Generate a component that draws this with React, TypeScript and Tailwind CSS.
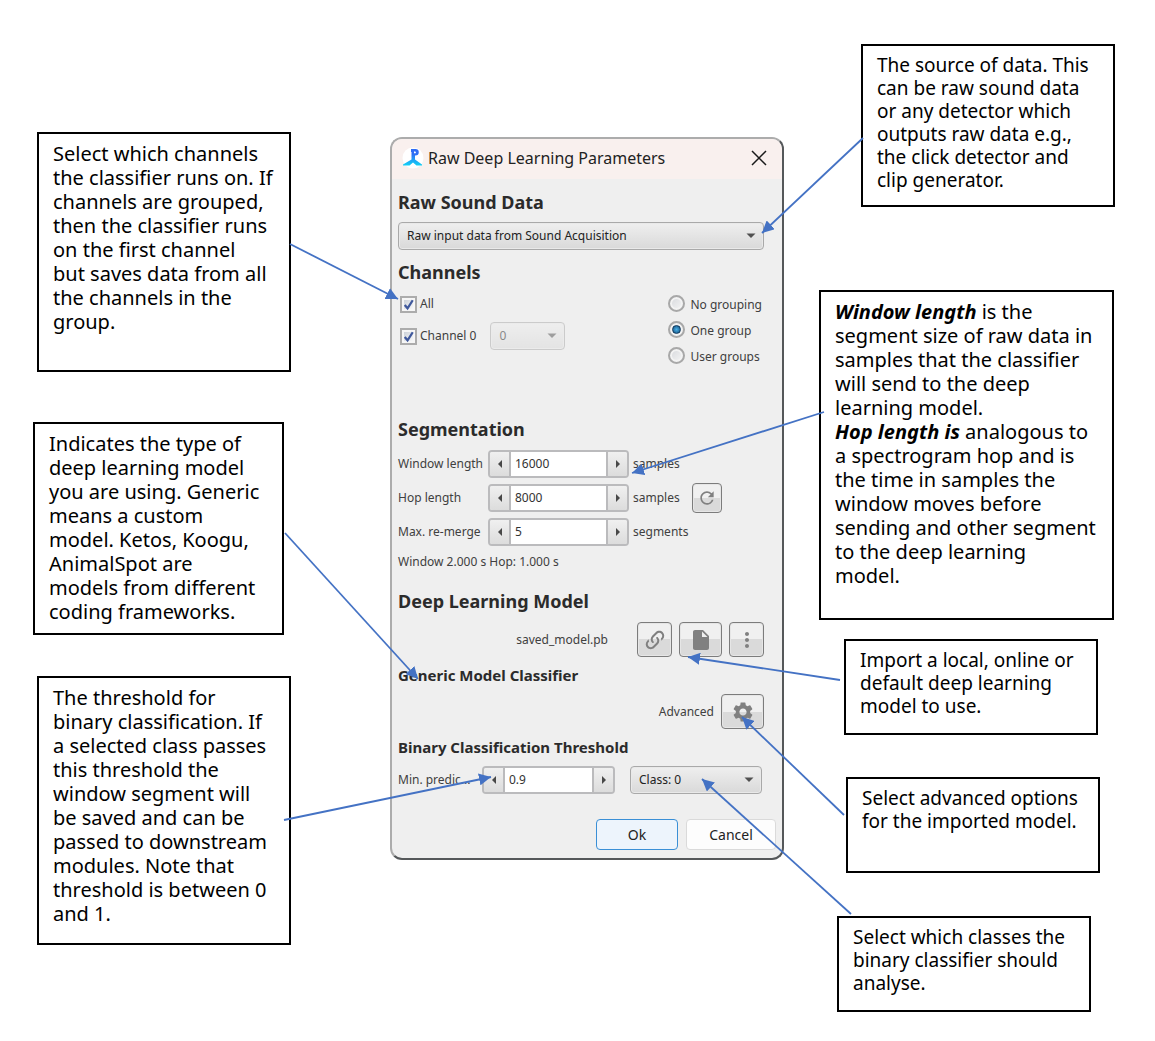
import { useId, useState, type ReactNode } from "react";
import { MdInsertDriveFile, MdMoreVert, MdRefresh, MdSettings } from "react-icons/md";

function Callout({ className, children }: { className: string; children: ReactNode }) {
  return (
    <aside className={`whitespace-pre border-2 border-black bg-white px-3.5 pt-2 text-black ${className}`}>
      {children}
    </aside>
  );
}

function Triangle({ d, className }: { d: string; className: string }) {
  return (
    <svg viewBox="0 0 10 10" className={className} aria-hidden="true">
      <path d={d} fill="currentColor" />
    </svg>
  );
}

function Dropdown({
  label,
  options,
  className,
  disabled = false,
}: {
  label: string;
  options: string[];
  className: string;
  disabled?: boolean;
}) {
  return (
    <div className={`relative h-7 ${className} ${disabled ? "opacity-50" : ""}`}>
      <select
        aria-label={label}
        disabled={disabled}
        className="h-7 w-full appearance-none rounded-[4px] border border-[#a9a9a9] bg-linear-to-b from-[#efefef] to-[#d9d9d9] px-2 text-xs text-[#222] ring-1 ring-[#e9e9e9] ring-inset"
      >
        {options.map((o) => (
          <option key={o}>{o}</option>
        ))}
      </select>
      <Triangle d="M0.5 2.5H9.5L5 7Z" className="pointer-events-none absolute top-[9px] right-2 size-2.5 text-[#505050]" />
    </div>
  );
}

function Spinner({ id, initial, step, width }: { id: string; initial: number; step: number; width: string }) {
  const [value, setValue] = useState(String(initial));
  const change = (by: number) => setValue((v) => String(Math.round((Number(v) + by) * 10) / 10));
  const button =
    "flex w-[19px] shrink-0 items-center justify-center bg-linear-to-b from-[#f0f0f0] to-[#dcdcdc] text-[#484848]";
  return (
    <div className={`flex h-7 shrink-0 overflow-hidden rounded-[4px] border-2 border-[#bbbbbd] ${width}`}>
      <button type="button" aria-label="Decrease" className={button} onClick={() => change(-step)}>
        <Triangle d="M7 1V9L3 5Z" className="size-2.5" />
      </button>
      <input
        id={id}
        value={value}
        onChange={(e) => setValue(e.target.value)}
        className="w-full min-w-0 border-x-2 border-[#bbbbbd] bg-white px-1 text-xs text-[#333]"
      />
      <button type="button" aria-label="Increase" className={button} onClick={() => change(step)}>
        <Triangle d="M3 1V9L7 5Z" className="size-2.5" />
      </button>
    </div>
  );
}

function IconButton({ label, className, children }: { label: string; className: string; children: ReactNode }) {
  return (
    <button
      type="button"
      aria-label={label}
      className={`flex shrink-0 items-center justify-center rounded-[4px] border border-[#7c7c7c] bg-linear-to-b from-[#f0f0f0] from-50% to-[#dadada] to-50% text-[#808080] ring-1 ring-[#e6e6e6] ring-inset ${className}`}
    >
      {children}
    </button>
  );
}

function Check({ label }: { label: string }) {
  const [on, setOn] = useState(true);
  return (
    <label className="flex items-center gap-[3px]">
      <span className="relative size-[17px]">
        <input
          type="checkbox"
          checked={on}
          onChange={() => setOn(!on)}
          className="block size-[17px] appearance-none border-2 border-[#acacac] bg-linear-to-br from-[#c4cad2] to-white ring-2 ring-[#f6f6f6] ring-inset"
        />
        {on && (
          <svg viewBox="0 0 18 18" className="pointer-events-none absolute inset-0 size-[17px]" aria-hidden="true">
            <path d="M5 9.5L8 13L13.5 4.5" fill="none" stroke="#3f589c" strokeWidth="2.4" />
          </svg>
        )}
      </span>
      {label}
    </label>
  );
}

function Radio({ label, checked, onSelect }: { label: string; checked: boolean; onSelect: () => void }) {
  return (
    <label className="flex h-[26px] items-center gap-[5px]">
      <span className="relative mb-1 size-[17px]">
        <input
          type="radio"
          name="grouping"
          checked={checked}
          onChange={onSelect}
          className="block size-[17px] appearance-none rounded-full border-2 border-[#a8a8a8] bg-linear-to-br from-[#d6d8dc] to-[#f6f6f6] ring-2 ring-[#f3f3f3] ring-inset"
        />
        {checked && (
          <span className="pointer-events-none absolute inset-1 rounded-full border border-[#123a5e] bg-radial from-[#49b0e8] to-[#11507f]" />
        )}
      </span>
      {label}
    </label>
  );
}

function SpinnerRow({
  label,
  unit,
  initial,
  step,
  children,
}: {
  label: string;
  unit: string;
  initial: number;
  step: number;
  children?: ReactNode;
}) {
  const id = useId();
  return (
    <div className="flex h-7 items-center">
      <label htmlFor={id} className="w-[90px] shrink-0 whitespace-nowrap">
        {label}
      </label>
      <Spinner id={id} initial={initial} step={step} width="w-[141px]" />
      <span className="w-[63px] shrink-0 pl-1">{unit}</span>
      {children}
    </div>
  );
}

function Dialog() {
  const [grouping, setGrouping] = useState("One group");
  const predictionId = useId();
  const section = "text-lg leading-6 font-bold text-[#2b2b2b]";
  const subsection = "text-[15px] leading-5 font-bold text-[#2b2b2b]";
  return (
    <section
      role="dialog"
      aria-labelledby="dialog-title"
      className="mt-[137px] w-[394px] shrink-0 overflow-hidden rounded-xl border-2 border-t-[#acacac] border-r-[#55585a] border-b-[#55585a] border-l-[#acacac] bg-[#efefef] text-xs text-[#404040]"
    >
      <header className="flex h-10 items-center bg-[#f9f0ee] pr-[15px] pb-0.5 pl-2.5">
        <svg viewBox="0 0 22 22" className="mr-1 size-[22px]" aria-hidden="true">
          <defs>
            <linearGradient id="logo" x1="0" y1="0" x2="0" y2="1">
              <stop offset="0.3" stopColor="#2f6df5" />
              <stop offset="1" stopColor="#13d2f5" />
            </linearGradient>
          </defs>
          <circle cx="11" cy="11" r="10.5" fill="#fff" />
          <path
            d="M9 2H13.5A3.2 3.2 0 0 1 13.5 8.5H13V12.5L20 17.5V18.5H14.5L11 15.5L7.5 18.5H1V17.5L9.5 12.5V5H9ZM12 4.5V6.3H13A0.9 0.9 0 0 0 13 4.5Z"
            fill="url(#logo)"
            fillRule="evenodd"
          />
        </svg>
        <h1 id="dialog-title" className="grow text-base text-[#222]">
          Raw Deep Learning Parameters
        </h1>
        <button type="button" aria-label="Close">
          <svg viewBox="0 0 16 16" className="size-4" aria-hidden="true">
            <path d="M1 1L15 15M15 1L1 15" stroke="#1a1a1a" strokeWidth="1.5" />
          </svg>
        </button>
      </header>

      <div className="px-1.5 pt-[11px] pb-2">
        <h2 className={section}>Raw Sound Data</h2>
        <Dropdown
          label="Raw Sound Data"
          options={["Raw input data from Sound Acquisition"]}
          className="mt-2 mr-3"
        />

        <h2 className={`mt-2.5 ${section}`}>Channels</h2>
        <div className="mt-1.5 flex items-start justify-between pr-3.5">
          <div className="pl-0.5">
            <div className="flex h-7 items-center">
              <Check label="All" />
            </div>
            <div className="mt-1 flex items-center justify-between gap-3.5">
              <Check label="Channel 0" />
              <Dropdown label="Channel 0 group" options={["0"]} className="w-[75px]" disabled />
            </div>
          </div>
          <fieldset className="flex flex-col pt-0.5">
            {["No grouping", "One group", "User groups"].map((g) => (
              <Radio key={g} label={g} checked={grouping === g} onSelect={() => setGrouping(g)} />
            ))}
          </fieldset>
        </div>

        <h2 className={`mt-[47px] ${section}`}>Segmentation</h2>
        <div className="mt-[9px] flex flex-col gap-1.5">
          <SpinnerRow label="Window length" unit="samples" initial={16000} step={1000} />
          <SpinnerRow label="Hop length" unit="samples" initial={8000} step={1000}>
            <IconButton label="Reset hop length" className="size-[30px]">
              <MdRefresh className="size-5" />
            </IconButton>
          </SpinnerRow>
          <SpinnerRow label="Max. re-merge" unit="segments" initial={5} step={1} />
        </div>
        <p className="mt-1.5 leading-5">Window 2.000 s Hop: 1.000 s</p>

        <h2 className={`mt-[17px] ${section}`}>Deep Learning Model</h2>
        <div className="mt-[9px] flex items-center justify-end pr-3">
          <span className="mr-[29px]">saved_model.pb</span>
          <IconButton label="Model from link" className="mr-[7px] h-[35px] w-[35px]">
            <svg viewBox="0 0 24 24" className="size-6" fill="currentColor" aria-hidden="true">
              <path d="M10.59 13.41C11 13.8 11 14.44 10.59 14.83C10.2 15.22 9.56 15.22 9.17 14.83C7.22 12.88 7.22 9.71 9.17 7.76L12.71 4.22C14.66 2.27 17.83 2.27 19.78 4.22C21.73 6.17 21.73 9.34 19.78 11.29L18.29 12.78C18.3 11.96 18.17 11.14 17.89 10.36L18.36 9.88C19.54 8.71 19.54 6.81 18.36 5.64C17.19 4.46 15.29 4.46 14.12 5.64L10.59 9.17C9.41 10.34 9.41 12.24 10.59 13.41M13.41 9.17C13.8 8.78 14.44 8.78 14.83 9.17C16.78 11.12 16.78 14.29 14.83 16.24L11.29 19.78C9.34 21.73 6.17 21.73 4.22 19.78C2.27 17.83 2.27 14.66 4.22 12.71L5.71 11.22C5.7 12.04 5.83 12.86 6.11 13.65L5.64 14.12C4.46 15.29 4.46 17.19 5.64 18.36C6.81 19.54 8.71 19.54 9.88 18.36L13.41 14.83C14.59 13.66 14.59 11.76 13.41 10.59C13 10.2 13 9.56 13.41 9.17Z" />
            </svg>
          </IconButton>
          <IconButton label="Model from file" className="mr-[7px] h-[35px] w-[43px]">
            <MdInsertDriveFile className="size-6" />
          </IconButton>
          <IconButton label="More models" className="h-[35px] w-[35px]">
            <MdMoreVert className="size-6" />
          </IconButton>
        </div>

        <h3 className={`mt-2 ${subsection}`}>Generic Model Classifier</h3>
        <div className="mt-[9px] flex items-center justify-end gap-[7px] pr-3">
          <span>Advanced</span>
          <IconButton label="Advanced" className="h-[35px] w-[43px]">
            <MdSettings className="size-6" />
          </IconButton>
        </div>

        <h3 className={`mt-2 ${subsection}`}>Binary Classification Threshold</h3>
        <div className="mt-[9px] flex items-center pr-3.5">
          <label htmlFor={predictionId} className="w-[84px] shrink-0">
            Min. predic...
          </label>
          <Spinner id={predictionId} initial={0.9} step={0.1} width="w-[133px]" />
          <Dropdown label="Class" options={["Class: 0"]} className="ml-auto w-[132px]" />
        </div>

        <div className="mt-[25px] flex justify-end gap-2 text-sm text-[#222]">
          <button type="button" className="h-[31px] w-[82px] rounded-[4px] border border-[#3a8fd6] bg-[#edf4fc]">
            Ok
          </button>
          <button type="button" className="h-[31px] w-[90px] rounded-[4px] border border-[#dadada] bg-[#fdfdfd]">
            Cancel
          </button>
        </div>
      </div>
    </section>
  );
}

const arrows = [
  [863, 138, 762, 233],
  [290, 244, 398, 299],
  [824, 412, 632, 473],
  [285, 533, 418, 679],
  [840, 680, 688, 657],
  [844, 815, 742, 717],
  [284, 820, 491, 777],
  [851, 914, 702, 779],
];

export default function App() {
  return (
    <div className="min-h-screen overflow-x-auto bg-white font-['Noto_Sans',sans-serif]">
      <main className="relative mx-auto flex w-fit items-start pr-10 pl-[33px]">
        <div className="mt-[132px] mr-[99px] flex w-[258px] shrink-0 flex-col text-xl leading-6">
          <Callout className="ml-1 min-h-60">
            {"Select which channels\nthe classifier runs on. If\nchannels are grouped,\nthen the classifier runs\non the first channel\nbut saves data from all\nthe channels in the\ngroup."}
          </Callout>
          <Callout className="mt-[50px] mr-[7px] min-h-[213px]">
            {"Indicates the type of\ndeep learning model\nyou are using. Generic\nmeans a custom\nmodel. Ketos, Koogu,\nAnimalSpot are\nmodels from different\ncoding frameworks."}
          </Callout>
          <Callout className="mt-[41px] ml-1 min-h-[269px]">
            {"The threshold for\nbinary classification. If\na selected class passes\nthis threshold the\nwindow segment will\nbe saved and can be\npassed to downstream\nmodules. Note that\nthreshold is between 0\nand 1."}
          </Callout>
        </div>

        <Dialog />

        <div className="mt-11 ml-[35px] flex w-[296px] shrink-0 flex-col items-start pb-7 text-[19px] leading-[23px]">
          <Callout className="ml-[42px] min-h-[163px] w-[254px]">
            {"The source of data. This\ncan be raw sound data\nor any detector which\noutputs raw data e.g.,\nthe click detector and\nclip generator."}
          </Callout>
          <Callout className="mt-[83px] min-h-[330px] w-[295px] text-xl leading-6">
            <b className="italic">Window length</b>
            {" is the\nsegment size of raw data in\nsamples that the classifier\nwill send to the deep\nlearning model.\n"}
            <b className="italic">Hop length is</b>
            {" analogous to\na spectrogram hop and is\nthe time in samples the\nwindow moves before\nsending and other segment\nto the deep learning\nmodel."}
          </Callout>
          <Callout className="mt-[19px] ml-[25px] min-h-24 w-[254px]">
            {"Import a local, online or\ndefault deep learning\nmodel to use."}
          </Callout>
          <Callout className="mt-[42px] ml-[27px] min-h-24 w-[254px]">
            {"Select advanced options\nfor the imported model."}
          </Callout>
          <Callout className="mt-[43px] ml-[18px] min-h-24 w-[254px]">
            {"Select which classes the\nbinary classifier should\nanalyse."}
          </Callout>
        </div>

        <svg
          viewBox="0 0 1155 1041"
          className="pointer-events-none absolute top-0 left-0 h-[1041px] w-[1155px]"
          aria-hidden="true"
        >
          <defs>
            <marker
              id="head"
              viewBox="0 0 12 12"
              refX="12"
              refY="6"
              markerWidth="12"
              markerHeight="12"
              markerUnits="userSpaceOnUse"
              orient="auto"
            >
              <path d="M0 0L12 6L0 12Z" fill="#4472c4" />
            </marker>
          </defs>
          {arrows.map(([x1, y1, x2, y2]) => (
            <line
              key={`${x1}-${y1}`}
              x1={x1}
              y1={y1}
              x2={x2}
              y2={y2}
              stroke="#4472c4"
              strokeWidth="1.8"
              markerEnd="url(#head)"
            />
          ))}
        </svg>
      </main>
    </div>
  );
}
